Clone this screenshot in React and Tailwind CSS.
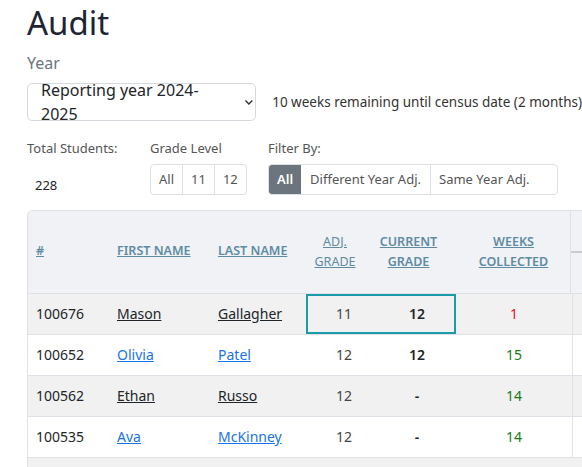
import React from "react";

const rows = [
  { id: "100676", f: "Mason", l: "Gallagher", adj: "11", cur: "12", w: "1", wc: "text-[#e8112d]", link: false, hl: true, bg: "bg-[#f1f1f1]" },
  { id: "100652", f: "Olivia", l: "Patel", adj: "12", cur: "12", w: "15", wc: "text-[#1a7a1a]", link: true, bg: "bg-white" },
  { id: "100562", f: "Ethan", l: "Russo", adj: "12", cur: "-", w: "14", wc: "text-[#1a7a1a]", link: false, bg: "bg-[#f1f1f1]" },
  { id: "100535", f: "Ava", l: "McKinney", adj: "12", cur: "-", w: "14", wc: "text-[#1a7a1a]", link: true, bg: "bg-white" },
];

export default function App() {
  return (
    <div className="w-[582px] h-[467px] overflow-hidden bg-white text-[#212529] font-['Inter',sans-serif]">
      <div className="pl-[27px] pt-[3px]">
        <h1 className="text-[33px] leading-[40px] text-[#1d2433]">Audit</h1>
        <div className="mt-[10px] text-[16px] leading-[20px] text-[#6c757d]">Year</div>
        <div className="mt-[10px] flex items-center">
          <div className="w-[252px] h-[38px] border border-[#d5d8dc] rounded-[5px] flex items-center pl-[13px] text-[16px] text-[#212529]">
            Reporting year 2024-2025
            <svg className="ml-[12px]" width="12" height="12" viewBox="0 0 12 12"><path d="M2.5 4.5 L6 8 L9.5 4.5" fill="none" stroke="#333" strokeWidth="1.4" /></svg>
          </div>
          <div className="ml-[16px] text-[13.5px] whitespace-nowrap text-[#333]">10 weeks remaining until census date (2 months)</div>
        </div>
        <div className="mt-[17px] flex text-[13px] text-[#555]">
          <div className="w-[123px]">
            <div className="leading-[20px]">Total Students:</div>
            <div className="mt-[18px] ml-[8px] text-[#212529]">228</div>
          </div>
          <div className="w-[118px]">
            <div className="leading-[20px]">Grade Level</div>
            <div className="mt-[6px] flex h-[31px] w-fit border border-[#dcdfe3] rounded-[4px] overflow-hidden">
              <div className="px-[8px] flex items-center">All</div>
              <div className="px-[8px] flex items-center border-l border-[#dcdfe3]">11</div>
              <div className="px-[8px] flex items-center border-l border-[#dcdfe3]">12</div>
            </div>
          </div>
          <div>
            <div className="leading-[20px]">Filter By:</div>
            <div className="mt-[6px] flex h-[31px] w-[290px] border border-[#dcdfe3] rounded-[4px] overflow-hidden whitespace-nowrap">
              <div className="px-[8px] flex items-center bg-[#6c757d] text-white font-semibold">All</div>
              <div className="px-[9px] flex items-center">Different Year Adj.</div>
              <div className="px-[8px] flex items-center border-l border-[#dcdfe3]">Same Year Adj.</div>
            </div>
          </div>
        </div>
        <div className="mt-[14px] w-[600px] border-l border-t border-[#dee2e6] rounded-tl-[6px] overflow-hidden">
          <div className="flex h-[83px] bg-[#f0f2f5] items-center text-[12.5px] font-semibold text-[#5e8ba3] underline border-b border-[#dee2e6]">
            <div className="w-[89px] pl-[8px]">#</div>
            <div className="w-[101px]">FIRST NAME</div>
            <div className="w-[90px] whitespace-nowrap">LAST NAME</div>
            <div className="w-[50px] ml-[2px] text-center font-normal leading-[20px]">ADJ.<br/>GRADE</div>
            <div className="w-[97px] text-center leading-[20px]">CURRENT<br/>GRADE</div>
            <div className="w-[113px] text-center leading-[20px]">WEEKS<br/>COLLECTED</div>
            <div className="h-full border-l border-[#dee2e6] flex items-center"><div className="w-[14px] h-[2px] bg-[#c9cdd2]" /></div>
          </div>
          {rows.map((r) => (
            <div key={r.id} className={`flex h-[41px] items-center text-[14px] border-b border-[#dee2e6] ${r.bg}`}>
              <div className="w-[89px] pl-[8px]">{r.id}</div>
              <div className={`w-[101px] underline ${r.link ? "text-[#1a73e8]" : "text-[#212529]"}`}>{r.f}</div>
              <div className={`w-[88px] underline ${r.link ? "text-[#1a73e8]" : "text-[#212529]"}`}>{r.l}</div>
              <div className={`flex h-full ${r.hl ? "border-2 border-[#1a9aaa]" : "border-2 border-transparent"}`}>
                <div className="w-[72px] flex items-center justify-center text-[#444]">{r.adj}</div>
                <div className="w-[74px] flex items-center justify-center font-semibold">{r.cur}</div>
              </div>
              <div className={`w-[116px] text-center ${r.wc}`}>{r.w}</div>
              <div className="h-full border-l border-[#dee2e6]" />
            </div>
          ))}
          <div className="h-[20px] bg-[#f1f1f1]" />
        </div>
      </div>
    </div>
  );
}
